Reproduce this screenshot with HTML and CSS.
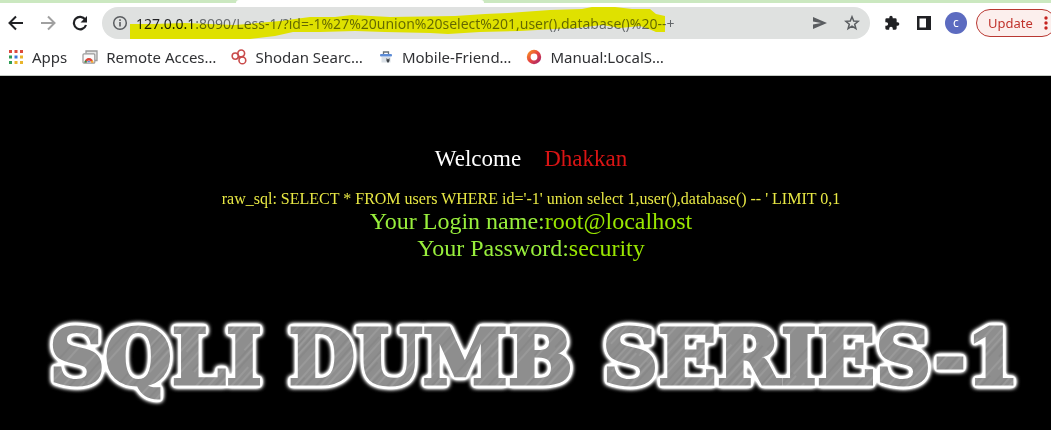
FILE: index.html
```html
<!DOCTYPE html>
<html lang="en">
<head>
<meta charset="utf-8">
<meta name="viewport" content="width=device-width, initial-scale=1">
<title>Less-1</title>
<link rel="stylesheet" href="styles.css">
</head>
<body>
<header class="browser">
  <div class="tab-strip"><div class="active-tab"></div></div>
  <div class="toolbar">
    <nav class="history" aria-label="History">
      <button class="icon-button" aria-label="Back"><svg width="16" height="16" viewBox="0 0 16 16" fill="none" stroke="#202124" stroke-width="2"><path d="M15 8H2M8 1.500L1.500 8L8 14.500"/></svg></button>
      <button class="icon-button" aria-label="Forward"><svg width="16" height="16" viewBox="0 0 16 16" fill="none" stroke="#a0a0a0" stroke-width="2"><path d="M1 8H14M8 1.500L14.500 8L8 14.500"/></svg></button>
      <button class="icon-button" aria-label="Reload"><svg width="16" height="16" viewBox="0 0 16 16"><path d="M13.200 4.500A6.200 6.200 0 1 0 14 10" fill="none" stroke="#202124" stroke-width="2.200"/><path d="M15 1v6.500H8.500z" fill="#202124"/></svg></button>
    </nav>
    <div class="address">
      <button class="icon-button" aria-label="Site information"><svg width="16" height="16" viewBox="0 0 16 16" fill="none" stroke="#5a5d60"><circle cx="8" cy="8" r="6.300" stroke-width="1.500"/><path d="M8 7v4.500M8 4.300v1.600" stroke-width="1.600"/></svg></button>
      <div class="url-field">
        <input class="url" type="text" aria-label="Address" spellcheck="false" value="127.0.0.1:8090/Less-1/?id=-1%27%20union%20select%201,user(),database()%20--+">
        <svg class="marker" width="540" height="36" viewBox="0 0 540 36" aria-hidden="true"><path d="M0 18H24L55 17L105 19L150 15L180 11H205L222 9L260 11L325 10L355 8L378 7L420 4L452 3L462 1H485L502 3H520L526 8L535 10V26H526L519 23L510 20L490 22L472 19L447 22L425 23L390 25L350 26L318 28L300 27L255 26L225 25L190 26L163 26L145 30L120 33L108 34L75 34L65 35H22L18 33H0Z" fill="#ffff00"/></svg>
      </div>
      <button class="icon-button" aria-label="Share"><svg width="16" height="16" viewBox="0 0 16 16" fill="#5a5d60"><path d="M1 2L15 8L1 14V9.500L9 8L1 6.500z"/></svg></button>
      <button class="icon-button" aria-label="Bookmark this page"><svg width="16" height="16" viewBox="0 0 16 16" fill="none" stroke="#5a5d60" stroke-width="1.500"><path d="M8 1.800L9.700 6L14.200 6.300L10.700 9.200L11.900 13.700L8 11.200L4.100 13.700L5.300 9.200L1.800 6.300L6.300 6z"/></svg></button>
    </div>
    <div class="actions">
      <button class="icon-button" aria-label="Extensions"><svg width="16" height="16" viewBox="0 0 24 24" fill="#202124"><path d="M20.500 11H19V7a2 2 0 0 0-2-2h-4V3.500a2.500 2.500 0 0 0-5 0V5H4a2 2 0 0 0-2 2v3.800h1.500a2.700 2.700 0 0 1 0 5.400H2V20a2 2 0 0 0 2 2h3.800v-1.500a2.700 2.700 0 0 1 5.400 0V22H17a2 2 0 0 0 2-2v-4h1.500a2.500 2.500 0 0 0 0-5z"/></svg></button>
      <button class="icon-button" aria-label="Side panel"><svg width="16" height="16" viewBox="0 0 16 16"><path d="M1 1H15V15H1zM3.500 3.500V12.500H10V3.500z" fill="#202124" fill-rule="evenodd"/></svg></button>
    </div>
    <button class="profile" aria-label="Profile">c</button>
    <button class="update">Update<svg width="4" height="14" viewBox="0 0 4 14" fill="#c5221f" aria-hidden="true"><circle cx="2" cy="2" r="1.700"/><circle cx="2" cy="7" r="1.700"/><circle cx="2" cy="12" r="1.700"/></svg></button>
  </div>
  <nav class="bookmarks" aria-label="Bookmarks">
    <a href="#apps"><svg width="16" height="16" viewBox="0 0 16 16"><path d="M1 1h3v3H1zM6.500 1h3v3h-3zM12 1h3v3h-3z" fill="#dc4a3d"/><path d="M1 6.500h3v3H1z" fill="#2f9e57"/><path d="M6.500 6.500h3v3h-3z" fill="#3b78d8"/><path d="M12 6.500h3v3h-3zM6.500 12h3v3h-3zM12 12h3v3h-3z" fill="#e9b52c"/><path d="M1 12h3v3H1z" fill="#2f9e57"/></svg>Apps</a>
    <a href="#remote"><svg width="16" height="16" viewBox="0 0 16 16"><path d="M4 4.500V2H15V11.500H12.500" fill="#e6e6e6" stroke="#999" stroke-width="1.300"/><rect x="1" y="4.800" width="11.800" height="9.400" rx="1" fill="#fafafa" stroke="#999" stroke-width="1.200"/><path d="M2.400 13.600a4.500 4.500 0 0 1 9 0z" fill="#dc4437"/><path d="M2.400 13.600a4.500 4.500 0 0 1 .8-2.400l2.800 2.400z" fill="#219653"/><path d="M11.400 13.600a4.500 4.500 0 0 0-.8-2.400l-2.800 2.400z" fill="#f4bd2c"/><path d="M5 13.600a1.900 1.900 0 0 1 3.800 0z" fill="#3979db" stroke="#fff" stroke-width=".5"/></svg>Remote Acces…</a>
    <a href="#shodan"><svg width="16" height="16" viewBox="0 0 18 18" fill="none" stroke="#c94b4b" stroke-width="1.800"><circle cx="4.800" cy="8" r="3.500"/><circle cx="11.500" cy="5" r="3.800"/><circle cx="12.800" cy="12.800" r="3.800"/><path d="M8 9L10 10.500"/></svg>Shodan Searc…</a>
    <a href="#mobile"><svg width="16" height="16" viewBox="-1 -1 16 16"><path d="M4.500 4V2h5v2" fill="none" stroke="#667078" stroke-width="1.300"/><path d="M2.500 7h9v5.500h-9z" fill="#dbe1e7"/><rect x="1" y="4" width="12" height="2.600" rx="1" fill="#5d8cd6"/><path d="M7.500 8v3l1.500 2l1.500-2V8L9 9.500z" fill="#3f4449"/></svg>Mobile-Friend…</a>
    <a href="#manual"><svg width="16" height="16" viewBox="0 0 16 16"><defs><linearGradient id="ring" x1="0" y1="0" x2="1" y2="1"><stop offset="0" stop-color="#f58a28"/><stop offset=".5" stop-color="#e64340"/><stop offset="1" stop-color="#ad2866"/></linearGradient></defs><circle cx="8" cy="8" r="5.300" fill="none" stroke="url(#ring)" stroke-width="3.800"/></svg>Manual:LocalS…</a>
  </nav>
</header>
<main class="page">
  <p class="welcome">Welcome<span class="name">Dhakkan</span></p>
  <p class="query">raw_sql: SELECT * FROM users WHERE id='-1' union select 1,user(),database() -- ' LIMIT 0,1</p>
  <p class="result">Your Login name:<span class="value">root@localhost</span><br>Your Password:<span class="value">security</span></p>
  <h1 class="banner">
    <svg class="banner-art" viewBox="0 0 1051 120">
      <defs>
        <pattern id="brushed" width="61" height="240" patternUnits="userSpaceOnUse" patternTransform="rotate(42)">
          <rect width="61" height="240" fill="#8e8e8e"/>
          <path d="M2 0V70M6 40V160M11 0V120M17 90V200M21 20V90M26 130V240M29 0V110M34 60V190M40 0V80M43 120V230M48 30V150M53 0V100M57 140V240" stroke="#b0b0b0" stroke-width=".6"/>
          <path d="M4 60V160M9 0V90M14 30V140M19 150V240M24 0V60M31 90V210M37 20V130M45 0V90M51 110V240M59 10V120" stroke="#787878" stroke-width=".6"/>
        </pattern>
        <filter id="outline" x="-2%" y="-20%" width="104%" height="140%" color-interpolation-filters="sRGB">
          <feGaussianBlur in="SourceAlpha" stdDeviation="1.500" result="soft"/>
          <feComponentTransfer in="soft" result="rim"><feFuncA type="linear" slope="14" intercept="-.2"/></feComponentTransfer>
          <feGaussianBlur in="rim" stdDeviation="2" result="spread"/>
          <feComponentTransfer in="spread" result="glow"><feFuncA type="linear" slope="2"/></feComponentTransfer>
          <feFlood flood-color="#fff" result="white"/>
          <feComposite in="white" in2="glow" operator="in" result="whiteGlow"/>
          <feComposite in="white" in2="rim" operator="in" result="whiteRim"/>
          <feMerge><feMergeNode in="whiteGlow"/><feMergeNode in="whiteRim"/><feMergeNode in="SourceGraphic"/></feMerge>
        </filter>
      </defs>
      <text class="banner-text" y="79" text-anchor="middle" filter="url(#outline)"><tspan x="169">SQLI </tspan><tspan x="444">DUMB </tspan><tspan x="811">SERIES-1</tspan></text>
    </svg>
  </h1>
</main>
</body>
</html>
```
FILE: styles.css
```css
* { box-sizing: border-box; }
body {
  margin: 0;
  min-height: 100vh;
  background: #000;
  font-family: "Noto Sans", sans-serif;
}
button { padding: 0; border: 0; background: none; font: inherit; }
svg { display: block; flex: none; }

.browser { background: #fff; border-bottom: 1px solid #c5cbc5; }
.tab-strip { height: 3px; padding-left: 236px; background: #cbe8c0; }
.active-tab { width: 248px; height: 3px; border-radius: 3px 3px 0 0; background: #fff; }

.toolbar {
  display: flex;
  align-items: center;
  padding-top: 4px;
  overflow: hidden;
}
.history { display: flex; gap: 16px; padding: 0 14px 0 8px; }
.icon-button { display: grid; place-items: center; flex: none; }
.address {
  display: flex;
  flex: 1;
  align-items: center;
  gap: 16px;
  min-width: 0;
  height: 32px;
  padding: 0 10px;
  border-radius: 16px;
  background: #dfe1e0;
}
.url-field { position: relative; flex: 1; min-width: 0; margin-left: -8px; }
.url {
  display: block;
  width: 100%;
  height: 32px;
  padding: 0;
  border: 0;
  outline: 0;
  background: linear-gradient(90deg, #202124 60px, #63676a 60px);
  -webkit-background-clip: text;
  background-clip: text;
  color: transparent;
  font: 14px "Noto Sans", sans-serif;
}
.marker {
  position: absolute;
  top: -1px;
  left: -6px;
  mix-blend-mode: multiply;
  pointer-events: none;
}
.actions { display: flex; align-items: center; gap: 16px; padding: 0 13px 0 14px; }
.profile {
  flex: none;
  width: 22px;
  height: 22px;
  margin-right: 9px;
  border-radius: 50%;
  background: #5c6bc0;
  color: #fff;
  font-size: 12px;
  line-height: 20px;
}
.update {
  display: flex;
  align-items: center;
  justify-content: space-between;
  flex: none;
  width: 80px;
  height: 28px;
  margin-right: -5px;
  padding: 0 7px 0 11px;
  border: 1px solid #b93832;
  border-radius: 14px;
  background: #fcefed;
  color: #c0332c;
  font-size: 13px;
}

.bookmarks { display: flex; gap: 15px; height: 36px; padding: 0 0 1px 8px; }
.bookmarks a {
  display: flex;
  align-items: center;
  gap: 8px;
  color: #303134;
  font-size: 15px;
  text-decoration: none;
  white-space: nowrap;
}

.page {
  padding: 69px 0 0 11px;
  font-family: "Liberation Serif", serif;
  text-align: center;
}
.page p { margin: 0; }
.welcome { color: #fff; font-size: 23px; line-height: 27px; }
.name { margin-left: 23px; color: #d91414; }
.page .query { margin-top: 17px; color: #e8e844; font-size: 16px; line-height: 19px; }
.result { color: #98ee3c; font-size: 24px; line-height: 27px; }
.value { color: #99e600; }
.banner { margin: 43px 0 0 -11px; }
.banner-art { width: 100%; height: auto; }
.banner-text {
  fill: url(#brushed);
  stroke: url(#brushed);
  stroke-width: 3px;
  font: bold 77px "DejaVu Serif", serif;
}
```
